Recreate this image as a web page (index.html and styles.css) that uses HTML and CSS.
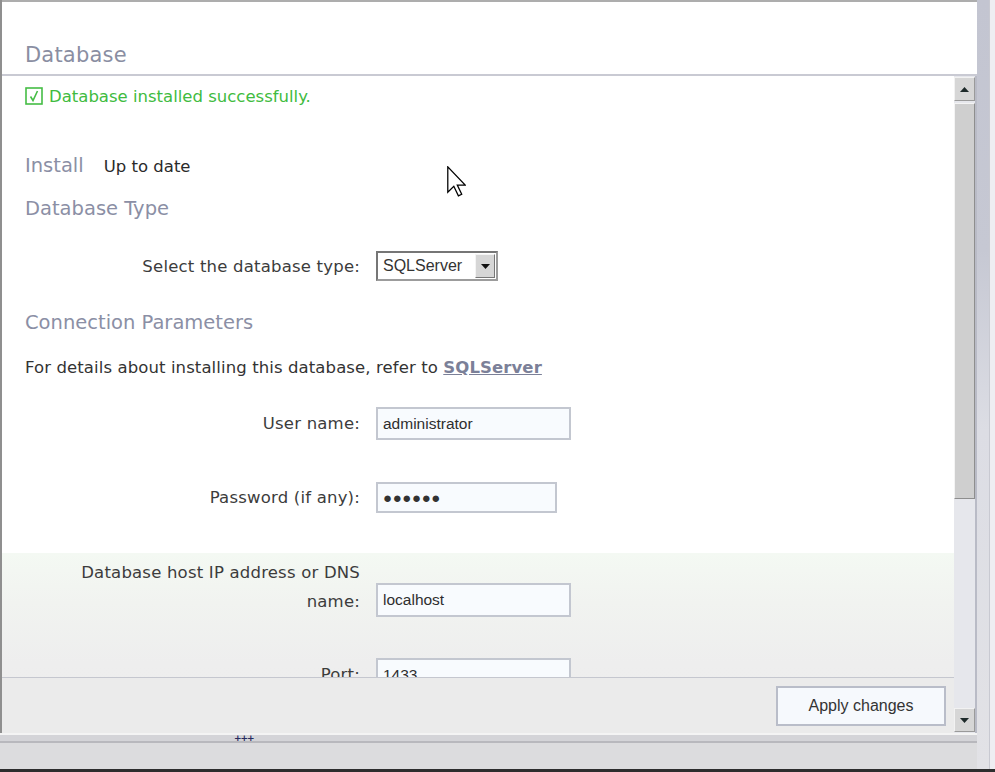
FILE: index.html
```html
<!DOCTYPE html>
<html lang="en">
<head>
<meta charset="utf-8">
<title>Database</title>
<link rel="stylesheet" href="styles.css">
</head>
<body>
<div class="screen">
  <div class="app">
    <div class="window">
      <div class="title"><h1>Database</h1></div>
      <div class="window-body">
        <div class="pane">
          <div class="content">
            <div class="msg">
              <svg class="check" width="18" height="18" viewBox="0 0 18 18"><rect x="1" y="1" width="16" height="16" fill="#fff" stroke="#45bd45" stroke-width="1.6"/><path d="M5.5 9.5 L8 13.5 L12.5 4" fill="none" stroke="#45bd45" stroke-width="1.6"/></svg>
              <span>Database installed successfully.</span>
            </div>
            <div class="install"><span class="section-label">Install</span><span class="state">Up to date</span></div>
            <h2 class="section db-type">Database Type</h2>
            <div class="field select-field">
              <span class="field-label">Select the database type:</span>
              <div class="select"><span class="select-text">SQLServer</span><span class="select-btn"><svg width="9" height="5" viewBox="0 0 9 5"><path d="M0 0 H9 L4.5 5 Z" fill="#111"/></svg></span></div>
            </div>
            <h2 class="section conn">Connection Parameters</h2>
            <p class="details">For details about installing this database, refer to <a href="#" class="link">SQLServer</a></p>
            <div class="field user">
              <span class="field-label">User name:</span>
              <div class="textbox wide">administrator</div>
            </div>
            <div class="field pass">
              <span class="field-label">Password (if any):</span>
              <div class="textbox pw">●●●●●●</div>
            </div>
            <div class="advanced">
              <div class="field host">
                <span class="field-label">Database host IP address or DNS name:</span>
                <div class="textbox wide hostbox">localhost</div>
              </div>
              <div class="field port">
                <span class="field-label">Port:</span>
                <div class="textbox wide">1433</div>
              </div>
            </div>
          </div>
          <div class="footer"><button class="apply">Apply changes</button></div>
        </div>
        <div class="scrollbar">
          <div class="sb-btn"><svg width="9" height="5" viewBox="0 0 9 5"><path d="M0 5 H9 L4.5 0 Z" fill="#1e2a2a"/></svg></div>
          <div class="sb-thumb"></div>
          <div class="sb-track"></div>
          <div class="sb-btn down"><svg width="9" height="5" viewBox="0 0 9 5"><path d="M0 0 H9 L4.5 5 Z" fill="#1e2a2a"/></svg></div>
        </div>
      </div>
    </div>
    <div class="splitter"><span class="grip">+++</span></div>
    <div class="statusbar"></div>
  </div>
  <div class="rstrip"></div>
</div>
<div class="taskbar"></div>
<svg class="cursor" width="19" height="31" viewBox="0 0 12 19.5"><path d="M0.5 0.5 L0.5 16.5 L4.3 12.8 L7.2 18.8 L9.3 17.8 L6.5 12 L11.5 12 Z" fill="#fff" stroke="#000" stroke-width="0.8" stroke-linejoin="miter"/></svg>
</body>
</html>
```
FILE: styles.css
```css
html, body {
  margin: 0;
  padding: 0;
}
body {
  position: relative;
  width: 995px;
  height: 772px;
  overflow: hidden;
  background: #dcdcde;
  font-family: "DejaVu Sans", Verdana, sans-serif;
}
.screen {
  display: flex;
  height: 769px;
}
.app {
  width: 977px;
  display: flex;
  flex-direction: column;
}
.window {
  height: 733px;
  box-sizing: border-box;
  border-left: 2px solid #8f8f8f;
  display: flex;
  flex-direction: column;
  background: #fff;
}
.title {
  height: 76px;
  box-sizing: border-box;
  border-top: 2px solid #adadad;
  border-bottom: 2px solid #c9cad3;
  padding: 41px 0 0 23px;
}
.title h1 {
  margin: 0;
  font-size: 21px;
  line-height: 25px;
  font-weight: normal;
  color: #8a8ea2;
  letter-spacing: 0.2px;
}
.window-body {
  flex: 1;
  display: flex;
  min-height: 0;
}
.pane {
  width: 952px;
  display: flex;
  flex-direction: column;
}
.content {
  height: 601px;
  box-sizing: border-box;
  overflow: hidden;
  padding-left: 23px;
  background: #fff;
  font-size: 16.5px;
  color: #3a3a3a;
}
.msg {
  margin-top: 11px;
  height: 18px;
  display: flex;
  align-items: center;
  gap: 6px;
  color: #40bb40;
}
.check { flex: none; }
.install {
  margin-top: 49px;
  height: 24px;
  line-height: 24px;
  display: flex;
  align-items: baseline;
}
.section-label, .section {
  font-size: 19.5px;
  color: #8b8fa5;
  font-weight: normal;
}
.state {
  margin-left: 20px;
  color: #2a2a2a;
}
.section {
  margin: 0;
  line-height: 24px;
  height: 24px;
}
.db-type { margin-top: 19px; }
.conn { margin-top: 30px; }
.field {
  display: flex;
  align-items: center;
  gap: 16px;
}
.field-label {
  width: 300px;
  margin-left: 35px;
  text-align: right;
  line-height: 29px;
  color: #3c3c3c;
  letter-spacing: 0.2px;
  flex: none;
}
.select-field { margin-top: 30px; height: 30px; }
.select {
  width: 122px;
  height: 30px;
  box-sizing: border-box;
  border: 2px solid #767676;
  border-right-color: #9c9c9c;
  border-bottom-color: #9c9c9c;
  background: #fff;
  display: flex;
  align-items: center;
  padding: 0 1px 0 5px;
  font-family: "Liberation Sans", Arial, sans-serif;
  font-size: 16px;
  color: #333;
}
.select-text { flex: 1; }
.select-btn {
  width: 20px;
  height: 24px;
  box-sizing: border-box;
  background: #d6d6d6;
  border: 1px solid;
  border-color: #f4f4f4 #777 #777 #f4f4f4;
  display: flex;
  align-items: center;
  justify-content: center;
}
.details {
  margin: 21px 0 0;
  line-height: 24px;
  height: 24px;
  color: #333;
  letter-spacing: 0.1px;
}
.link {
  font-weight: bold;
  color: #7b8098;
  text-decoration: underline;
}
.textbox {
  height: 33px;
  box-sizing: border-box;
  border: 2px solid #c3c7d0;
  background: #f8fbfe;
  padding-left: 5px;
  display: flex;
  align-items: center;
  font-family: "Liberation Sans", Arial, sans-serif;
  font-size: 15.5px;
  color: #2e2e2e;
}
.wide { width: 195px; }
.user { margin-top: 27px; }
.pass { margin-top: 42px; }
.pw {
  width: 181px;
  height: 31px;
  font-size: 15px;
  letter-spacing: 0.6px;
  color: #333;
}
.advanced {
  margin: 40px 0 0 -23px;
  padding-left: 23px;
  padding-top: 5px;
  height: 200px;
  background: linear-gradient(#f4f9f3 0, #f1f3f0 50px, #eeeeee 110px, #ededed 100%);
}
.host { align-items: flex-start; }
.hostbox { margin-top: 25px; height: 34px; }
.port { margin-top: 41px; }
.footer {
  flex: 1;
  border-top: 1px solid #c5c7cf;
  background: #ebebeb;
  display: flex;
  justify-content: flex-end;
  align-items: flex-start;
  padding: 8px 8px 0 0;
}
.apply {
  width: 170px;
  height: 40px;
  border: 2px solid #b9bdc9;
  background: #f6f9fd;
  font-family: "Liberation Sans", Arial, sans-serif;
  font-size: 16px;
  color: #333;
  padding: 0;
}
.scrollbar {
  width: 23px;
  box-sizing: border-box;
  border-right: 2px solid #b9bbc6;
  padding-top: 1px;
  display: flex;
  flex-direction: column;
  background: #e6e7ec;
}
.sb-btn {
  height: 24px;
  box-sizing: border-box;
  background: #d6d6d6;
  border: 1px solid;
  border-color: #f2f2f2 #9a9a9a #9a9a9a #f2f2f2;
  display: flex;
  align-items: center;
  justify-content: center;
}
.sb-btn.down { margin-bottom: 1px; }
.sb-thumb {
  margin-top: 2px;
  height: 396px;
  box-sizing: border-box;
  background: #cfcfcf;
  border: 1px solid;
  border-color: #f4f4f4 #8e8e8e #8e8e8e #f4f4f4;
}
.sb-track { flex: 1; }
.splitter {
  height: 10px;
  box-sizing: border-box;
  border-top: 2px solid #f4f4f4;
  border-bottom: 2px solid #b8b8bd;
  background: #d4d4d8;
  padding-left: 234px;
  font-size: 9px;
  line-height: 6px;
  font-weight: bold;
  color: #262b5e;
}
.grip { letter-spacing: -1px; }
.statusbar {
  flex: 1;
  background: #dcdcde;
}
.rstrip {
  width: 18px;
  background:
    linear-gradient(to right, transparent 0 12px, #c8c9d1 12px 13px, #eeeef2 13px),
    linear-gradient(#c3c5d1 0, #c6c8d3 250px, #dcdde4 430px, #e2e2e6 100%);
}
.taskbar {
  height: 3px;
  background: #2d2d2d;
}
.cursor {
  position: absolute;
  left: 447px;
  top: 166px;
}
```
